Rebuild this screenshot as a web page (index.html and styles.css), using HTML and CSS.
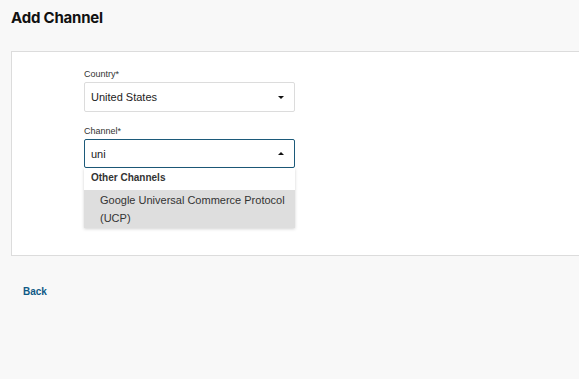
FILE: index.html
```html
<!DOCTYPE html>
<html lang="en">
<head>
    <meta charset="UTF-8">
    <meta name="viewport" content="width=device-width, initial-scale=1.0">
    <title>Add Channel</title>
    <link rel="stylesheet" href="styles.css">
</head>
<body>
    <div class="page">
        <h1 class="page-title">Add Channel</h1>

        <div class="panel">
            <div class="form">
                <div class="field">
                    <label class="field-label">Country*</label>
                    <div class="select">
                        <span class="select-value">United States</span>
                        <span class="caret caret-down"></span>
                    </div>
                </div>

                <div class="field field-open">
                    <label class="field-label">Channel*</label>
                    <div class="select select-focus">
                        <span class="select-value">uni</span>
                        <span class="caret caret-up"></span>
                    </div>
                    <div class="menu">
                        <div class="menu-group">Other Channels</div>
                        <div class="menu-item active">Google Universal Commerce Protocol (UCP)</div>
                    </div>
                </div>
            </div>
        </div>

        <div class="footer">
            <a class="back-link" href="#">Back</a>
        </div>
    </div>
</body>
</html>
```

FILE: styles.css
```css
body {
    margin: 0;
    background-color: #f8f8f8;
    font-family: "Liberation Sans", Arial, sans-serif;
    color: #222;
}
.page {
    padding-left: 11px;
}
.page-title {
    margin: 0;
    padding-top: 9px;
    height: 51px;
    box-sizing: border-box;
    font-family: Inter, "Liberation Sans", sans-serif;
    font-size: 15px;
    line-height: 18px;
    font-weight: 700;
    letter-spacing: -0.2px;
    color: #111;
}
.panel {
    background-color: #fff;
    border: 1px solid #dcdcdc;
    border-right: none;
    height: 205px;
    box-sizing: border-box;
    padding-top: 16px;
    padding-left: 72px;
}
.form {
    width: 211px;
}
.field {
    position: relative;
    margin-bottom: 13px;
}
.field-label {
    display: block;
    font-size: 9px;
    line-height: 12px;
    color: #333;
    margin-bottom: 2px;
}
.select {
    height: 30px;
    box-sizing: border-box;
    border: 1px solid #dcdcdc;
    border-radius: 2px;
    display: flex;
    align-items: center;
    justify-content: space-between;
    padding: 0 10px 0 6px;
    font-size: 11px;
    color: #222;
}
.select-focus {
    height: 29px;
    border-color: #1c5a7a;
}
.caret {
    width: 0;
    height: 0;
    border-left: 3px solid transparent;
    border-right: 3px solid transparent;
}
.caret-down {
    border-top: 3px solid #111;
}
.caret-up {
    border-bottom: 3px solid #111;
}
.menu {
    position: absolute;
    left: 0;
    right: 0;
    top: 43px;
    background-color: #fff;
    box-shadow: 0 1px 3px rgba(0, 0, 0, 0.18);
    z-index: 2;
}
.menu-group {
    height: 22px;
    line-height: 20px;
    padding-left: 7px;
    font-size: 10px;
    font-weight: 700;
    color: #333;
}
.menu-item {
    background-color: #dedede;
    padding: 1px 2px 1px 16px;
    font-size: 11px;
    line-height: 18px;
    color: #333;
}
.footer {
    padding: 25px 0 0 12px;
}
.back-link {
    font-size: 10px;
    font-weight: 700;
    color: #0f5a86;
    text-decoration: none;
}
```
